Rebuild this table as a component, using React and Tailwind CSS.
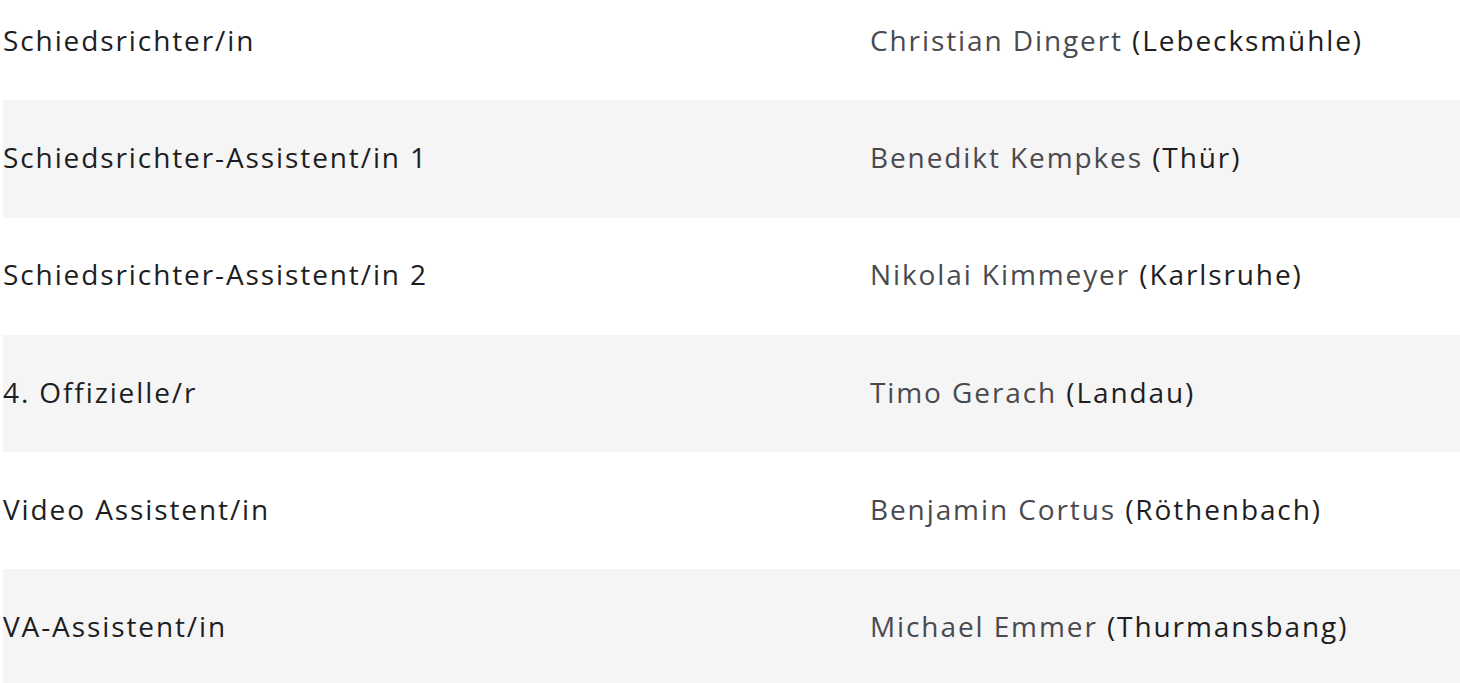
const officials = [
  { role: 'Schiedsrichter/in', name: 'Christian Dingert', club: 'Lebecksmühle' },
  { role: 'Schiedsrichter-Assistent/in 1', name: 'Benedikt Kempkes', club: 'Thür' },
  { role: 'Schiedsrichter-Assistent/in 2', name: 'Nikolai Kimmeyer', club: 'Karlsruhe' },
  { role: '4. Offizielle/r', name: 'Timo Gerach', club: 'Landau' },
  { role: 'Video Assistent/in', name: 'Benjamin Cortus', club: 'Röthenbach' },
  { role: 'VA-Assistent/in', name: 'Michael Emmer', club: 'Thurmansbang' },
];

export default function App() {
  return (
    <div className="w-[1460px] h-[683px] overflow-hidden bg-white" style={{ fontFamily: '"Open Sans", "Noto Sans", sans-serif' }}>
      <div className="mt-[-17px] ml-[3px]">
        {officials.map((o, i) => (
          <div
            key={o.role}
            className={`flex items-center h-[117.3px] text-[28px] tracking-[1.9px] ${i % 2 === 1 ? 'bg-[#f5f5f5]' : 'bg-white'}`}
          >
            <div className="w-[867px] shrink-0 pb-[4px] text-[#1e1e22]">{o.role}</div>
            <div className="pb-[4px] text-[#1e1e22]">
              <span className="text-[#4a4a4e]">{o.name}</span> ({o.club})
            </div>
          </div>
        ))}
      </div>
    </div>
  );
}
